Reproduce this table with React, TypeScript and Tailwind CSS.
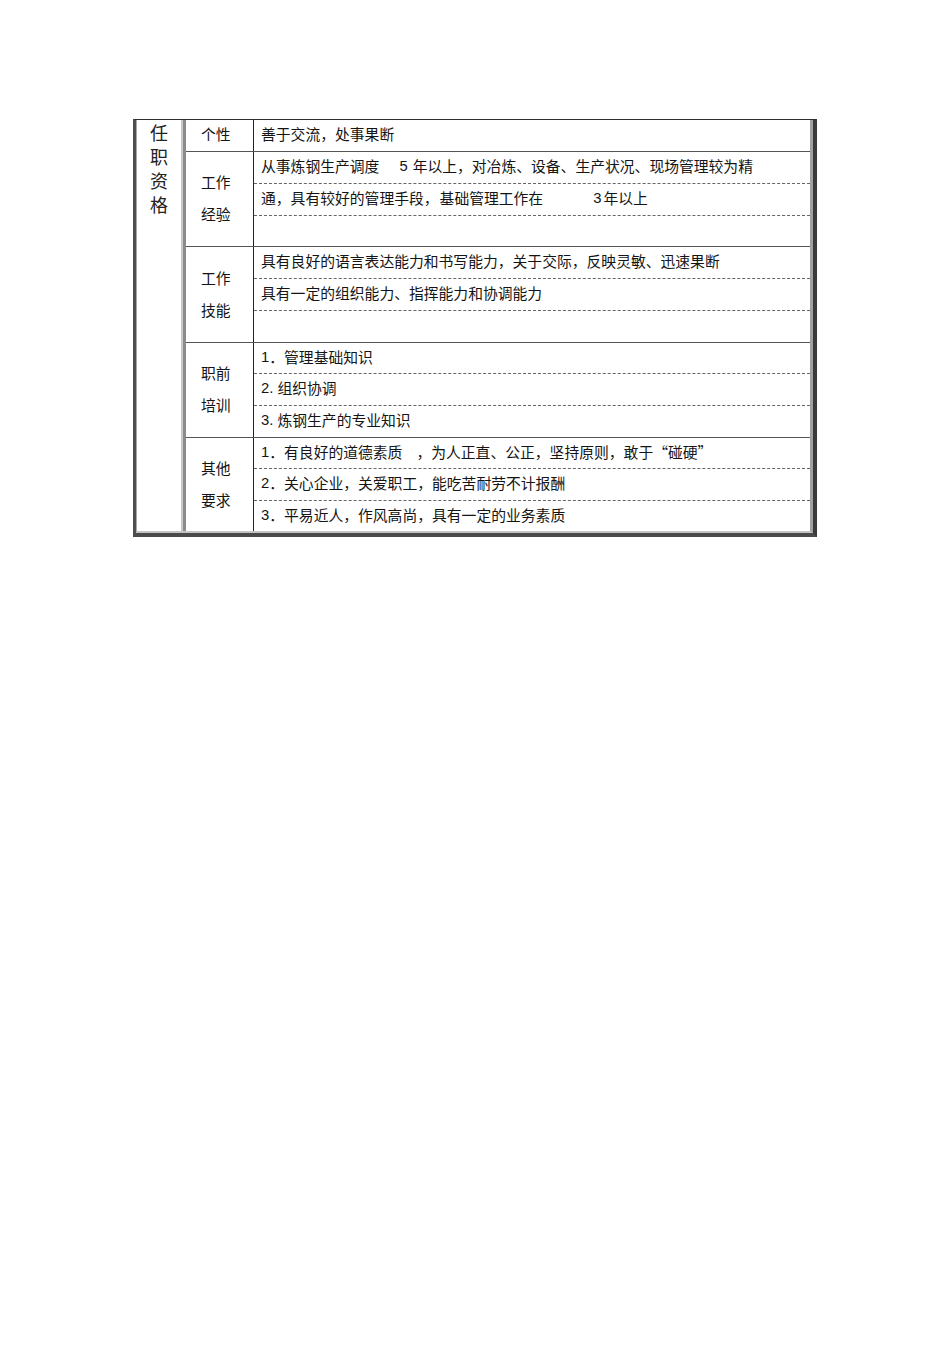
const CJK = "font-['Noto_Sans_CJK_SC',sans-serif] [text-spacing-trim:space-all]";
const LAT = "font-['Liberation_Sans',sans-serif]";

// 数字用 Liberation Sans
function N({ children, className = '' }: { children: React.ReactNode; className?: string }) {
  return <span className={`${LAT} ${className}`}>{children}</span>;
}

type Group = {
  label: [string, string];
  height: string;
  rows: { h: string; content: React.ReactNode }[];
  last?: boolean;
};

const groups: Group[] = [
  {
    label: ['工作', '经验'],
    height: 'h-[95px]',
    rows: [
      {
        h: 'h-[32px]',
        content: (
          <>
            从事炼钢生产调度<N className="ml-[20px]">5</N>
            <span className="ml-[5px]">年以上，对冶炼、设备、生产状况、现场管理较为精</span>
          </>
        ),
      },
      {
        h: 'h-[32px]',
        content: (
          <>
            通，具有较好的管理手段，<span className="ml-[1px]">基础管理工作在</span>
            <N className="ml-[50px]">3</N>
            <span className="ml-[2px]">年以上</span>
          </>
        ),
      },
      { h: '', content: null },
    ],
  },
  {
    label: ['工作', '技能'],
    height: 'h-[96px]',
    rows: [
      { h: 'h-[32px]', content: '具有良好的语言表达能力和书写能力，关于交际，反映灵敏、迅速果断' },
      { h: 'h-[32px]', content: '具有一定的组织能力、指挥能力和协调能力' },
      { h: '', content: null },
    ],
  },
  {
    label: ['职前', '培训'],
    height: 'h-[95px]',
    rows: [
      { h: 'h-[31px]', content: <><N>1</N>．管理基础知识</> },
      { h: 'h-[32px]', content: <><N>2.&nbsp;</N>组织协调</> },
      { h: '', content: <><N>3.&nbsp;</N>炼钢生产的专业知识</> },
    ],
  },
  {
    label: ['其他', '要求'],
    height: 'h-[93px]',
    last: true,
    rows: [
      {
        h: 'h-[31px]',
        content: (
          <>
            <N>1</N>．有良好的道德素质<span className="ml-[14px]">，为人正直、公正，坚持原则，敢于“碰硬”</span>
          </>
        ),
      },
      { h: 'h-[32px]', content: <><N>2</N>．关心企业，关爱职工，能吃苦耐劳不计报酬</> },
      { h: '', content: <><N>3</N>．平易近人，作风高尚，具有一定的业务素质</> },
    ],
  },
];

export default function App() {
  return (
    <div className={`min-h-[1345px] bg-white pt-[119px] pl-[133px] text-[#141414] ${CJK}`}>
      {/* 外框：立体边 */}
      <div className="w-[684px] border-t border-t-[#2e2e2e] border-l-[3px] border-l-[#4f4f4f] border-r-[4px] border-r-[#3a3a3a] border-b-[4px] border-b-[#4a4a4a]">
        <div className="flex border-l border-l-[#a8a8a8] border-r-[3px] border-r-[#a0a0a0] border-b-[2px] border-b-[#c4c4c4]">
          {/* 第一列 */}
          <div className="w-[46px] border-r-[2px] border-r-[#c8c8c8] flex flex-col items-center text-[18px] leading-[24px] text-[#222]">
            <span>任</span>
            <span>职</span>
            <span>资</span>
            <span>格</span>
          </div>

          {/* 右侧表格 */}
          <div className="flex-1 border-l-[3px] border-l-[#8c8c8c] text-[14.8px]">
            <div className="flex h-[32px] border-b border-b-[#555]">
              <div className="w-[68px] border-r border-r-[#222] pl-[15px] flex items-center pb-[2px]">个性</div>
              <div className="flex-1 pl-[7px] flex items-center pb-[2px]">善于交流，处事果断</div>
            </div>

            {groups.map((g, gi) => (
              <div
                key={gi}
                className={`flex ${g.height} ${g.last ? '' : 'border-b border-b-[#555]'}`}
              >
                <div className="w-[68px] border-r border-r-[#222] pl-[15px] flex flex-col justify-center leading-[32px] pb-[2px]">
                  <span>{g.label[0]}</span>
                  <span>{g.label[1]}</span>
                </div>
                <div className="flex-1 flex flex-col">
                  {g.rows.map((r, ri) => (
                    <div
                      key={ri}
                      className={`${r.h || 'flex-1'} ${
                        ri < g.rows.length - 1 ? 'border-b border-dashed border-b-[#666]' : ''
                      } pl-[7px] flex items-center whitespace-nowrap pb-[2px]`}
                    >
                      {r.content}
                    </div>
                  ))}
                </div>
              </div>
            ))}
          </div>
        </div>
      </div>
    </div>
  );
}
